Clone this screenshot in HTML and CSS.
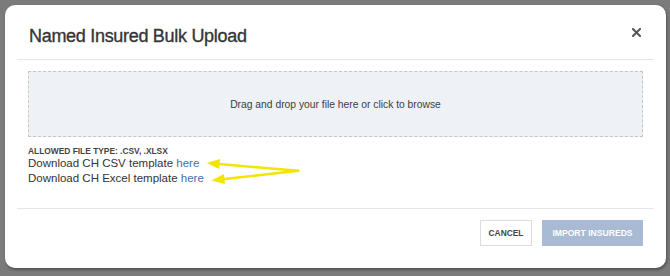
FILE: index.html
```html
<!DOCTYPE html>
<html lang="en">
<head>
    <meta charset="UTF-8">
    <meta name="viewport" content="width=device-width, initial-scale=1.0">
    <title>Named Insured Bulk Upload</title>
    <link rel="stylesheet" href="styles.css">
</head>
<body>
    <div class="modal">
        <div class="modal-header">
            <h2 class="modal-title">Named Insured Bulk Upload</h2>
            <button class="close-btn" aria-label="Close">
                <svg width="9" height="9" viewBox="0 0 9 9">
                    <path d="M1 1L8 8M8 1L1 8" stroke="#555" stroke-width="2" stroke-linecap="square"/>
                </svg>
            </button>
        </div>

        <div class="modal-body">
            <div class="dropzone">Drag and drop your file here or click to browse</div>
            <div class="allowed">ALLOWED FILE TYPE: .CSV, .XLSX</div>
            <div class="templates">
                <div>Download CH CSV template <a href="#">here</a></div>
                <div>Download CH Excel template <a href="#">here</a></div>
            </div>
        </div>

        <div class="modal-footer">
            <button class="btn btn-cancel">CANCEL</button>
            <button class="btn btn-import">IMPORT INSUREDS</button>
        </div>

        <!-- annotation arrows drawn over the screenshot -->
        <svg class="arrows" width="105" height="35" viewBox="0 0 105 35">
            <g stroke="#f2e600" stroke-width="2.5" stroke-linecap="round" fill="none">
                <path d="M98.3 15.7L19.6 9.1"/>
                <path d="M98.3 15.7L24.4 24.0"/>
            </g>
            <g fill="#f2e600">
                <polygon points="6.7,8 20.1,4.1 19.2,14.1"/>
                <polygon points="11.5,25.5 25,29 23.9,19.1"/>
            </g>
        </svg>
    </div>
</body>
</html>
```

FILE: styles.css
```css
body {
    font-family: "Liberation Sans", Arial, sans-serif;
    background: #7b7b7b;
    margin: 0;
    padding: 5px;
    color: #333;
}
.modal {
    position: relative;
    width: 661px;
    background: white;
    border-radius: 10px;
    padding: 0 12px;
    box-sizing: border-box;
    box-shadow: 1px 2px 3px rgba(0,0,0,0.35);
}
.modal-header {
    display: flex;
    justify-content: space-between;
    align-items: flex-start;
    padding: 20px 12px 12px;
    border-bottom: 1px solid #e6e6e6;
}
.modal-title {
    margin: 0;
    font-size: 18px;
    line-height: 22px;
    font-weight: normal;
    letter-spacing: -0.3px;
    color: #353535;
    -webkit-text-stroke: 0.35px #353535;
}
.close-btn {
    background: none;
    border: none;
    padding: 0;
    margin-top: 3px;
    margin-right: 1px;
    display: flex;
}
.modal-body {
    padding: 11px 11px 22px;
    border-bottom: 1px solid #e6e6e6;
}
.dropzone {
    height: 64px;
    display: flex;
    align-items: center;
    justify-content: center;
    background: #eef2f7;
    border: 1px dashed #c6c6c6;
    font-size: 10.3px;
    color: #3c3c3c;
}
.allowed {
    margin-top: 9px;
    font-size: 8.4px;
    line-height: 10px;
    font-weight: bold;
    color: #444;
}
.templates {
    font-size: 11.5px;
    line-height: 15px;
    color: #333;
}
.templates a {
    color: #4470a8;
    text-decoration: none;
}
.modal-footer {
    display: flex;
    justify-content: flex-end;
    gap: 10px;
    padding: 11px 11px 22px;
}
.btn {
    height: 26px;
    font-family: inherit;
    font-size: 8.4px;
    font-weight: bold;
    border-radius: 0;
}
.btn-cancel {
    width: 52px;
    padding: 0;
    background: white;
    border: 1px solid #dcdcdc;
    color: #444;
}
.btn-import {
    width: 101px;
    padding: 0;
    background: #a8bad4;
    border: none;
    color: white;
    font-size: 8.6px;
}
.arrows {
    position: absolute;
    left: 195px;
    top: 150px;
}
```
